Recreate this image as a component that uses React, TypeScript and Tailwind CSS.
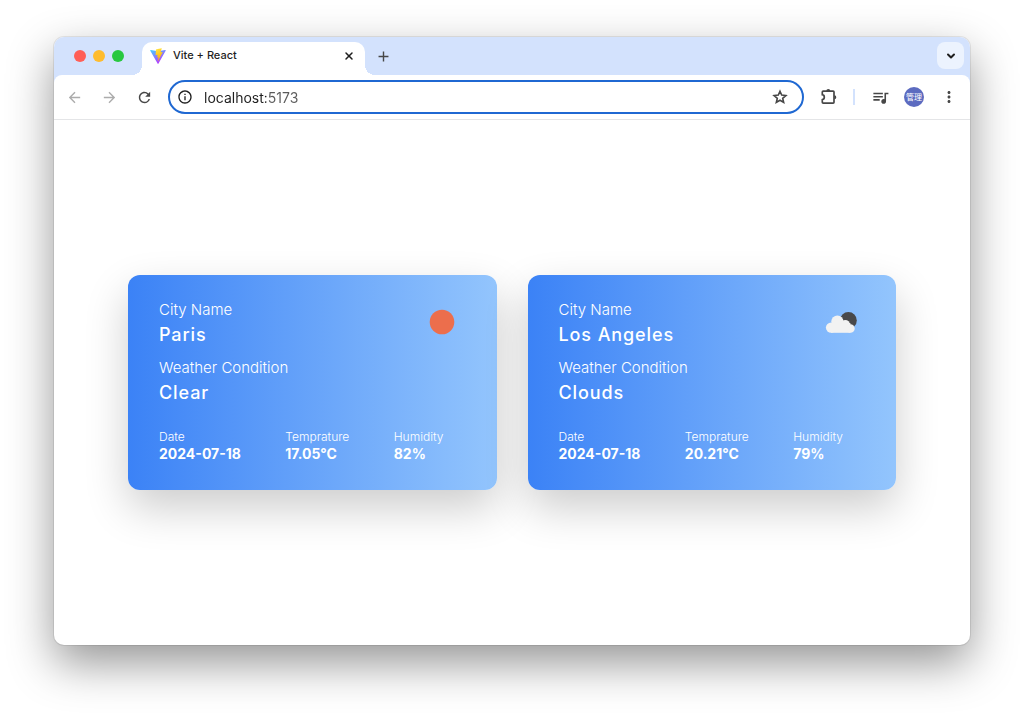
import type { ReactNode } from "react";
import { ChevronDown, X } from "lucide-react";
import {
  MdAdd,
  MdArrowBack,
  MdArrowForward,
  MdInfoOutline,
  MdMoreVert,
  MdQueueMusic,
  MdRefresh,
} from "react-icons/md";

type Weather = {
  city: string;
  condition: string;
  date: string;
  temperature: string;
  humidity: string;
  icon: ReactNode;
};

function SunIcon() {
  return (
    <svg viewBox="0 0 40 40" className="w-10 h-10" aria-hidden="true">
      <circle cx="20" cy="20" r="12.3" fill="#ec6e4c" />
    </svg>
  );
}

function CloudsIcon() {
  return (
    <svg viewBox="0 0 40 40" className="w-10 h-10" aria-hidden="true">
      <circle cx="27.4" cy="18.4" r="8.4" fill="#48484a" />
      <g fill="#f2f2f2">
        <circle cx="10.1" cy="25.6" r="5.2" />
        <circle cx="16.4" cy="19.6" r="6.1" />
        <circle cx="24.3" cy="22.6" r="4.6" />
        <circle cx="29.4" cy="26.5" r="4.3" />
        <rect x="10" y="21" width="19.400" height="9.800" />
      </g>
    </svg>
  );
}

function ViteLogo() {
  return (
    <svg viewBox="0 0 32 32" className="w-4 h-4 shrink-0" aria-hidden="true">
      <defs>
        <linearGradient id="vite-base" x1="0" y1="0" x2="0.6" y2="1">
          <stop offset="0" stopColor="#41d1ff" />
          <stop offset="1" stopColor="#bd34fe" />
        </linearGradient>
        <linearGradient id="vite-bolt" x1="0.4" y1="0" x2="0.6" y2="1">
          <stop offset="0" stopColor="#ffea83" />
          <stop offset="0.1" stopColor="#ffdd35" />
          <stop offset="1" stopColor="#ffa800" />
        </linearGradient>
      </defs>
      <path
        d="M31.3 5.6 17 31.2a1.1 1.1 0 0 1-1.9 0L.6 5.6a1.1 1.1 0 0 1 1.1-1.7L16 6.5l14.1-2.6a1.1 1.1 0 0 1 1.2 1.7z"
        fill="url(#vite-base)"
      />
      <path
        d="M22.8.5 12.2 2.6a.4.4 0 0 0-.3.4l-.7 11a.4.4 0 0 0 .5.4l3-.7c.3 0 .5.2.5.5l-.9 4.3c-.1.3.2.5.5.5l1.8-.6c.3 0 .5.2.5.5l-1.4 6.8c-.1.4.5.6.7.3l.2-.3 8.7-17.3c.1-.2-.1-.6-.4-.5l-3 .6a.4.4 0 0 1-.5-.5l2-7a.4.4 0 0 0-.6-.5z"
        fill="url(#vite-bolt)"
      />
    </svg>
  );
}

function StarIcon() {
  return (
    <svg viewBox="0 0 18 18" className="w-[18px] h-[18px]" aria-hidden="true">
      <path
        d="M9 3.2l1.7 3.9 4.2.4-3.2 2.8.95 4.15L9 12.25l-3.65 2.2.95-4.15-3.2-2.8 4.2-.4z"
        fill="none"
        stroke="currentColor"
        strokeWidth="1.6"
      />
    </svg>
  );
}

function ExtensionsIcon() {
  return (
    <svg viewBox="0 0 20 20" className="w-5 h-5" aria-hidden="true">
      <path
        d="M4.2 4.2h9.9q.9 0 .9.9v10.200q0 .9-.9.9H4.2q-.9 0-.9-.9v-2.700a2.500 2.500 0 0 0 0-4.900V5.100q0-.9.9-.9z"
        fill="none"
        stroke="currentColor"
        strokeWidth="1.7"
      />
      <path d="M7.3 4a2 2 0 0 1 4 0zM15.3 8.2a2 2 0 0 1 0 4z" fill="currentColor" />
    </svg>
  );
}

const cities: Weather[] = [
  {
    city: "Paris",
    condition: "Clear",
    date: "2024-07-18",
    temperature: "17.05°C",
    humidity: "82%",
    icon: <SunIcon />,
  },
  {
    city: "Los Angeles",
    condition: "Clouds",
    date: "2024-07-18",
    temperature: "20.21°C",
    humidity: "79%",
    icon: <CloudsIcon />,
  },
];

function Stat({ label, value }: { label: string; value: string }) {
  return (
    <div>
      <dt className="text-[12px] leading-4 font-light">{label}</dt>
      <dd className="text-[14px] leading-[18px] font-bold">{value}</dd>
    </div>
  );
}

function WeatherCard({ weather }: { weather: Weather }) {
  return (
    <article className="rounded-xl bg-linear-to-r/srgb from-[#3b82f6] to-[#93c5fd] pl-[31px] pr-[35px] pt-[23px] pb-[27px] text-white shadow-[0_18px_44px_rgba(0,0,0,0.2)]">
      <div className="flex justify-between">
        <div>
          <p className="text-[15px] leading-6 font-light">City Name</p>
          <h2 className="text-[18px] leading-[26px] font-medium tracking-wider">{weather.city}</h2>
          <p className="mt-2 text-[15px] leading-6 font-light">Weather Condition</p>
          <h3 className="text-[18px] leading-[26px] font-medium tracking-wider">{weather.condition}</h3>
        </div>
        <div className="pt-1">{weather.icon}</div>
      </div>
      <dl className="mt-[23px] pr-[18px] flex justify-between">
        <Stat label="Date" value={weather.date} />
        <Stat label="Temprature" value={weather.temperature} />
        <Stat label="Humidity" value={weather.humidity} />
      </dl>
    </article>
  );
}

export default function App() {
  return (
    <div className="min-h-screen flex bg-white px-[54px] pt-[37px] pb-[71px] font-['Inter',sans-serif]">
      <div className="flex-1 flex flex-col rounded-[10px] overflow-hidden bg-white shadow-[0_0_0_1px_rgba(0,0,0,0.08),0_18px_46px_rgba(0,0,0,0.42)]">
        {/* Tab strip */}
        <div className="h-[38px] flex items-end bg-[#d3e2fd] pl-5 pr-1.5">
          <div className="h-[38px] flex items-center gap-[7px]">
            <span className="w-3 h-3 rounded-full bg-[#ff5f57]"></span>
            <span className="w-3 h-3 rounded-full bg-[#febc2e]"></span>
            <span className="w-3 h-3 rounded-full bg-[#28c840]"></span>
          </div>
          <div className="flex items-end ml-2">
            <span className="w-2.5 h-2.5 bg-[radial-gradient(circle_at_0_0,transparent_10px,white_10px)]"></span>
            <div className="w-[223px] h-[33px] pb-1.5 rounded-t-[10px] bg-white flex items-center pl-2 pr-2.5">
              <ViteLogo />
              <span className="ml-[7px] flex-1 text-[11px] font-medium text-[#1f1f1f]">Vite + React</span>
              <button type="button" aria-label="Close tab" className="text-[#1f1f1f]">
                <X size={12} strokeWidth={3} />
              </button>
            </div>
            <span className="w-2.5 h-2.5 bg-[radial-gradient(circle_at_100%_0,transparent_10px,white_10px)]"></span>
          </div>
          <button type="button" aria-label="New tab" className="h-[38px] text-[#474747]">
            <MdAdd size={17} />
          </button>
          <button
            type="button"
            aria-label="Search tabs"
            className="ml-auto mb-1.5 w-[27px] h-[27px] rounded-lg bg-[#ecf3fe] flex items-center justify-center text-[#1f1f1f]"
          >
            <ChevronDown size={12} strokeWidth={4} />
          </button>
        </div>

        {/* Toolbar */}
        <div className="bg-[#d3e2fd]">
          <div className="h-[45px] flex items-center rounded-t-lg bg-white border-b border-[#e4e5e7] px-3 text-[#474747]">
            <div className="flex items-center gap-[18px]">
              <button type="button" aria-label="Back" className="text-[#acacac]">
                <MdArrowBack size={17} />
              </button>
              <button type="button" aria-label="Forward" className="text-[#acacac]">
                <MdArrowForward size={17} />
              </button>
              <button type="button" aria-label="Reload">
                <MdRefresh size={17} />
              </button>
            </div>
            <div className="ml-[15px] flex-1 h-[34px] flex items-center rounded-full border-2 border-[#1f68d2] pl-[7px] pr-[13px]">
              <MdInfoOutline size={16} className="text-[#1f1f1f] shrink-0" />
              <input
                type="text"
                aria-label="Address"
                defaultValue="localhost:5173"
                className="ml-[11px] flex-1 min-w-0 text-[14px] outline-none text-transparent bg-clip-text bg-[linear-gradient(to_right,#1f1f1f_62px,#5a5a5a_62px)]"
              />
              <button type="button" aria-label="Bookmark this page">
                <StarIcon />
              </button>
            </div>
            <div className="ml-[15px] flex items-center">
              <button type="button" aria-label="Extensions">
                <ExtensionsIcon />
              </button>
              <span className="ml-3.5 w-0.5 h-4 bg-[#d3e2fd]"></span>
              <button type="button" aria-label="Media controls" className="ml-4">
                <MdQueueMusic size={19} />
              </button>
              <button
                type="button"
                aria-label="Profile"
                className="ml-3.5 w-5 h-5 rounded-full bg-[#5c6bc0] text-white text-[8px] leading-5 font-['Noto_Sans_CJK_JP',sans-serif]"
              >
                管理
              </button>
              <button type="button" aria-label="Menu" className="ml-4">
                <MdMoreVert size={18} />
              </button>
            </div>
          </div>
        </div>

        {/* Page */}
        <main className="flex-1 flex items-center justify-center p-4">
          <div className="w-full max-w-3xl grid grid-cols-2 gap-[31px]">
            {cities.map((weather) => (
              <WeatherCard key={weather.city} weather={weather} />
            ))}
          </div>
        </main>
      </div>
    </div>
  );
}
